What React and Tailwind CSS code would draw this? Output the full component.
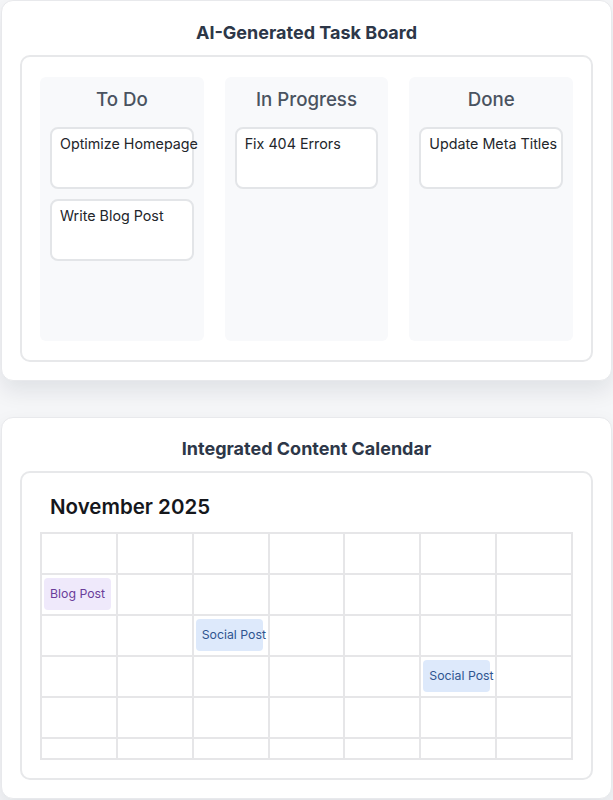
import React from 'react';

const columns = [
  { title: 'To Do', tasks: ['Optimize Homepage', 'Write Blog Post'] },
  { title: 'In Progress', tasks: ['Fix 404 Errors'] },
  { title: 'Done', tasks: ['Update Meta Titles'] },
];

// calendar events keyed by "row-col"
const events = {
  '1-0': { label: 'Blog Post', kind: 'blog' },
  '2-2': { label: 'Social Post', kind: 'social' },
  '3-5': { label: 'Social Post', kind: 'social' },
};

const rowHeights = ['h-[41px]', 'h-[41px]', 'h-[41px]', 'h-[41px]', 'h-[41px]', 'h-[21px]'];

function TaskBoard() {
  return (
    <section className="bg-white border border-[#e8e9ec] rounded-xl shadow-[0_10px_22px_rgba(15,23,42,0.09)] px-[18px] pt-[18px] pb-[18px]">
      <h2 className="text-center text-[18px] leading-[28px] font-bold text-[#2d3748] mb-[8px]">
        AI-Generated Task Board
      </h2>
      <div className="border-2 border-[#e7e8ea] rounded-[10px] px-[18px] pt-[20px] pb-[19px]">
        <div className="grid grid-cols-3 gap-[21px]">
          {columns.map((col) => (
            <div key={col.title} className="bg-[#f8f9fb] rounded-md h-[264px] px-[10px] pt-[9px]">
              <h3 className="text-center text-[18.7px] leading-[28px] font-medium text-[#4a5360] mb-[13px]">
                {col.title}
              </h3>
              <div className="flex flex-col gap-[10px]">
                {col.tasks.map((task) => (
                  <div
                    key={task}
                    className="bg-white border-2 border-[#e3e5e8] rounded-lg h-[62px] px-[8px] pt-[5px] text-[14.3px] leading-[20px] text-[#23262b] whitespace-nowrap"
                  >
                    {task}
                  </div>
                ))}
              </div>
            </div>
          ))}
        </div>
      </div>
    </section>
  );
}

function Calendar() {
  return (
    <section className="bg-white border border-[#e8e9ec] rounded-xl shadow-[0_10px_22px_rgba(15,23,42,0.09)] px-[18px] pt-[17px] pb-[18px] mt-[36px]">
      <h2 className="text-center text-[18px] leading-[28px] font-bold text-[#2d3748] mb-[8px]">
        Integrated Content Calendar
      </h2>
      <div className="border-2 border-[#e7e8ea] rounded-[10px] px-[18px] pt-[18px] pb-[18px]">
        <h3 className="px-[10px] text-[20.5px] leading-[32px] font-semibold text-[#15171c] mb-[9px]">
          November 2025
        </h3>
        <div className="border-t-2 border-l-2 border-[#e6e6e8]">
          {rowHeights.map((h, r) => (
            <div key={r} className="grid grid-cols-7">
              {Array.from({ length: 7 }).map((_, c) => {
                const ev = events[`${r}-${c}`];
                return (
                  <div key={c} className={`${h} border-r-2 border-b-2 border-[#e6e6e8] overflow-visible`}>
                    {ev && (
                      <div
                        className={`ml-[2px] mt-[3px] w-[67px] h-[32px] rounded px-[6px] flex items-center text-[12.3px] whitespace-nowrap ${
                          ev.kind === 'blog'
                            ? 'bg-[#efe9fb] text-[#6a3d9a]'
                            : 'bg-[#dde9fb] text-[#2f5590]'
                        }`}
                      >
                        {ev.label}
                      </div>
                    )}
                  </div>
                );
              })}
            </div>
          ))}
        </div>
      </div>
    </section>
  );
}

export default function App() {
  return (
    <div className="min-h-screen bg-[#f5f6f8] px-[1px] font-['Inter','Liberation_Sans',sans-serif]">
      <TaskBoard />
      <Calendar />
    </div>
  );
}
